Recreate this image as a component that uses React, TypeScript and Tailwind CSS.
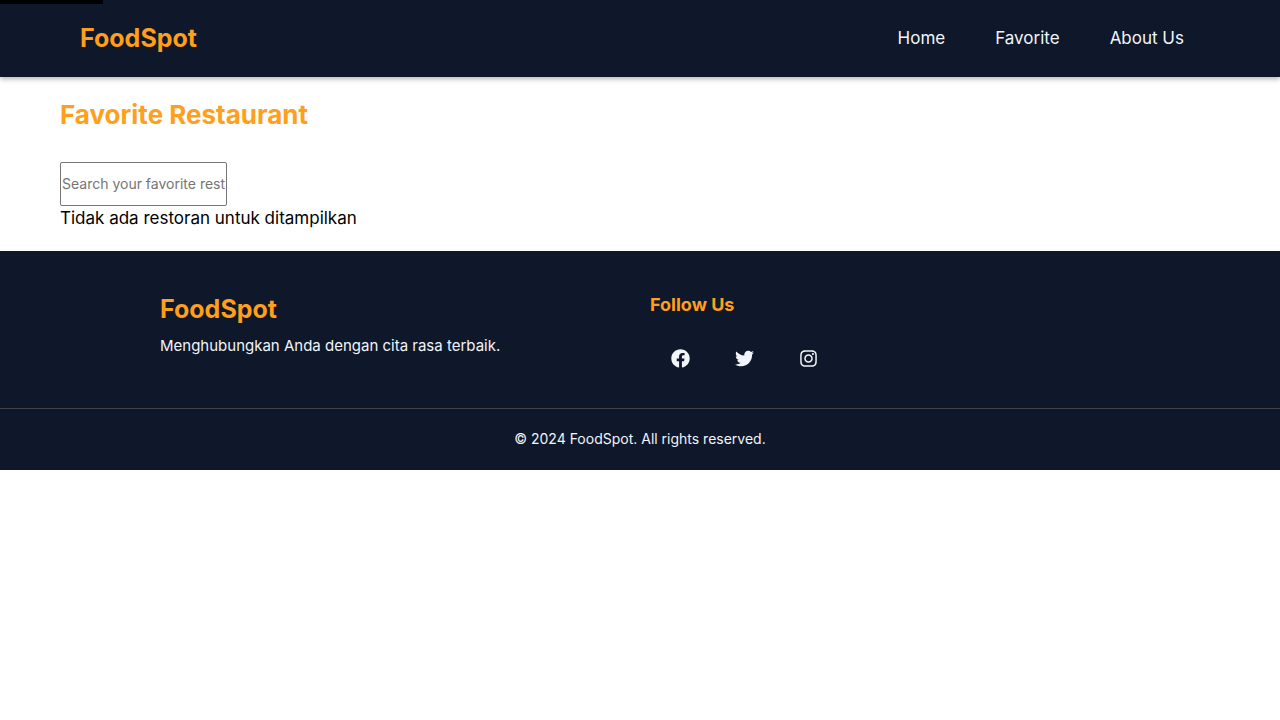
import type { ReactNode } from "react";
import { FaFacebook, FaInstagram, FaTwitter } from "react-icons/fa";

function NavLink({ children }: { children: ReactNode }) {
  return (
    <li>
      <a href="#" className="flex h-11 items-center px-4">
        {children}
      </a>
    </li>
  );
}

function SocialLink({ label, children }: { label: string; children: ReactNode }) {
  return (
    <li>
      <a href="#" aria-label={label} className="flex h-11 w-15 items-center justify-center text-[19px]">
        {children}
      </a>
    </li>
  );
}

export default function App() {
  return (
    <div className="bg-white font-['Inter',sans-serif] text-[17px] text-black">
      <a href="#content" aria-label="Skip to content" className="absolute top-0 left-0 h-1 w-[103px] bg-black" />
      <header className="flex h-[77px] items-center justify-between bg-[#0f172a] px-20 text-[#f1f5f9] shadow-[0_2px_5px_rgba(0,0,0,0.3)]">
        <a href="#" className="text-[25px] font-bold text-[#ff9f1c]">
          FoodSpot
        </a>
        <nav>
          <ul className="flex gap-[18px]">
            <NavLink>Home</NavLink>
            <NavLink>Favorite</NavLink>
            <NavLink>About Us</NavLink>
          </ul>
        </nav>
      </header>

      <main id="content" className="px-15 pt-5 pb-5">
        <h1 className="text-[26px] leading-9 font-bold text-[#ff9f1c]">Favorite Restaurant</h1>
        <input
          type="text"
          aria-label="Search your favorite restaurant"
          placeholder="Search your favorite restaurant"
          className="mt-[29px] block h-11 w-[167px] rounded-xs border border-[#767676] px-px pb-0.5 text-sm placeholder:text-[#757575]"
        />
        <p className="leading-[25px]">Tidak ada restoran untuk ditampilkan</p>
      </main>

      <footer className="bg-[#0f172a] text-[#f1f5f9]">
        <div className="mx-auto grid max-w-[960px] grid-cols-2 gap-5 pt-10 pb-7">
          <div>
            <h2 className="text-[25px] leading-9 font-bold text-[#ff9f1c]">FoodSpot</h2>
            <p className="mt-2 text-[15px] leading-[21px]">Menghubungkan Anda dengan cita rasa terbaik.</p>
          </div>
          <div>
            <h3 className="text-lg leading-7 font-bold text-[#ff9f1c]">Follow Us</h3>
            <ul className="mt-[17px] flex gap-1">
              <SocialLink label="Facebook">
                <FaFacebook />
              </SocialLink>
              <SocialLink label="Twitter">
                <FaTwitter />
              </SocialLink>
              <SocialLink label="Instagram">
                <FaInstagram />
              </SocialLink>
            </ul>
          </div>
        </div>
        <p className="border-t border-[#444444] pt-[19px] pb-[21px] text-center text-sm leading-[21px]">
          © 2024 FoodSpot. All rights reserved.
        </p>
      </footer>
    </div>
  );
}
